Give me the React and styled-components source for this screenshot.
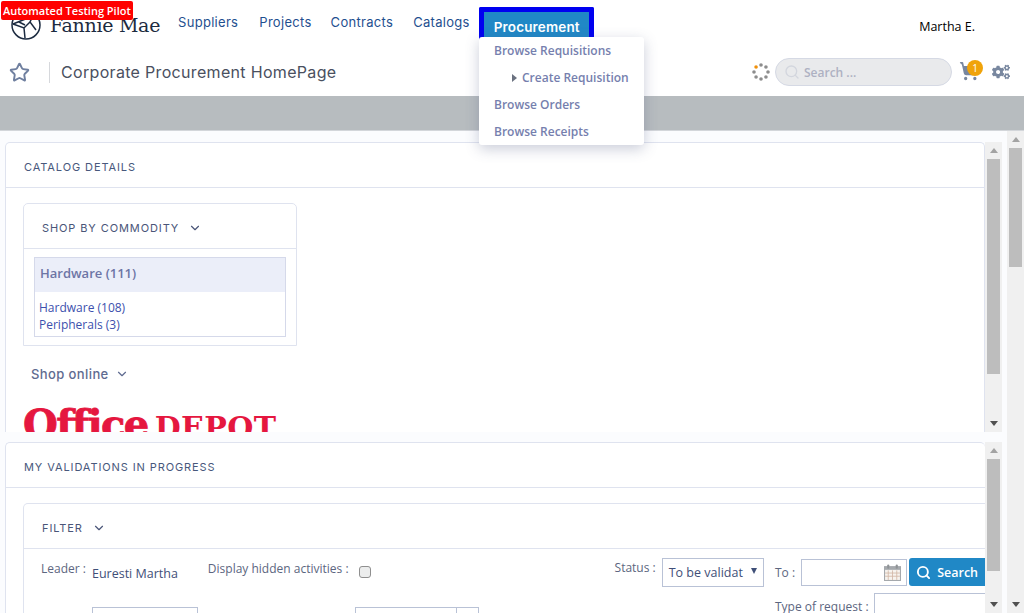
import React from 'react';
import styled, { createGlobalStyle } from 'styled-components';
import { ChevronDown, Star, Search, ShoppingCart } from 'lucide-react';
import { FaCogs } from 'react-icons/fa';

const GlobalStyle = createGlobalStyle`
  html, body { margin: 0; padding: 0; overflow: hidden; }
  body { font-family: "Open Sans", "Liberation Sans", sans-serif; background: #fbfcfe; }
  * { box-sizing: border-box; }
`;

const heading = `"Inter", "Open Sans", sans-serif`;

const Page = styled.div`
  position: relative;
  width: 1024px;
  height: 613px;
  overflow: hidden;
  display: flex;
  flex-direction: column;
`;

const Badge = styled.div`
  position: absolute;
  top: 1px;
  left: 1px;
  z-index: 5;
  background: #f00;
  color: #fff;
  font-size: 11px;
  font-weight: 600;
  line-height: 19px;
  height: 19px;
  padding: 0 2px;
  border-radius: 2px;
`;

const TopBar = styled.div`
  height: 48px;
  background: #fff;
  display: flex;
  padding-left: 11px;
`;

const Logo = styled.div`
  width: 167px;
  display: flex;
  align-items: flex-start;
  gap: 9px;
  padding-top: 10px;
`;

const LogoText = styled.div`
  font-family: "DejaVu Serif", serif;
  font-size: 19px;
  line-height: 30px;
  letter-spacing: -0.3px;
  color: #1c2b40;
  white-space: nowrap;
`;

const Nav = styled.nav`
  display: flex;
  align-items: flex-start;
`;

const NavLink = styled.a`
  font-family: ${heading};
  font-size: 13px;
  line-height: 16px;
  letter-spacing: 0.3px;
  color: #1f4f8f;
  margin-top: 14px;
  margin-right: ${(p) => p.$gap}px;
  white-space: nowrap;
`;

const ActiveNav = styled.a`
  margin-top: 7px;
  width: 115px;
  height: 41px;
  border: 5px solid #0000f0;
  border-bottom: 0;
  background: #2088c6;
  color: #fff;
  font-family: ${heading};
  font-size: 13.5px;
  font-weight: 600;
  line-height: 30px;
  letter-spacing: 0.15px;
  padding-left: 10px;
  border-radius: 2px 2px 0 0;
`;

const UserName = styled.div`
  margin-left: auto;
  margin-right: 49px;
  padding-top: 18px;
  font-size: 12.5px;
  line-height: 18px;
  color: #000;
`;

const Menu = styled.div`
  position: absolute;
  top: 37px;
  left: 479px;
  width: 165px;
  height: 108px;
  z-index: 4;
  background: #fff;
  border-radius: 3px;
  box-shadow: 0 4px 14px rgba(80, 90, 130, 0.3);
  display: flex;
  flex-direction: column;
`;

const MenuItem = styled.a`
  height: 27px;
  display: flex;
  align-items: center;
  gap: 5px;
  padding-left: ${(p) => (p.$sub ? 33 : 15)}px;
  font-size: 12px;
  font-weight: 600;
  color: #767fae;
  white-space: nowrap;
`;

const Caret = styled.span`
  width: 0;
  height: 0;
  border-left: 5px solid #6b7280;
  border-top: 4px solid transparent;
  border-bottom: 4px solid transparent;
`;

const TitleBar = styled.div`
  height: 48px;
  background: #fff;
  display: flex;
  align-items: center;
  padding-left: 9px;
`;

const Divider = styled.span`
  width: 1px;
  height: 21px;
  background: #d6d8dc;
  margin: 0 11px 0 19px;
`;

const PageTitle = styled.h1`
  margin: 0;
  font-family: ${heading};
  font-size: 16px;
  font-weight: 400;
  letter-spacing: 0.32px;
  color: #4a5060;
`;

const Tools = styled.div`
  margin-left: auto;
  display: flex;
  align-items: center;
  padding-right: 14px;
`;

const SearchBox = styled.div`
  width: 177px;
  height: 28px;
  margin: 0 7px 0 5px;
  border: 1px solid #d5d9e4;
  border-radius: 14px;
  background: #e9eaec;
  display: flex;
  align-items: center;
  padding-left: 8px;
  gap: 4px;
  font-size: 12px;
  font-weight: 600;
  color: #aeb1c2;
`;

const Cart = styled.div`
  position: relative;
  width: 33px;
  height: 22px;
  color: #78879f;
`;

const CartCount = styled.span`
  position: absolute;
  top: -1px;
  left: 8px;
  width: 16px;
  height: 16px;
  border-radius: 50%;
  background: #f0a30a;
  color: #fff;
  font-size: 10px;
  line-height: 16px;
  text-align: center;
`;

const Banner = styled.div`
  height: 35px;
  flex: none;
  background: #b7bcbf;
  border-bottom: 1px solid #d3d6da;
`;

const Body = styled.div`
  flex: 1;
  min-height: 0;
  display: flex;
`;

const Main = styled.div`
  width: 1002px;
  padding: 11px 0 0 5px;
  display: flex;
  flex-direction: column;
  gap: 10px;
`;

const Panel = styled.section`
  flex: none;
  height: ${(p) => p.$height}px;
  display: flex;
`;

const PanelInner = styled.div`
  width: 980px;
  overflow: hidden;
  background: #fff;
  border: 1px solid #dfe3ef;
  border-right: ${(p) => (p.$open ? 0 : '1px solid #dfe3ef')};
  border-bottom: 0;
  border-radius: 5px 5px 0 0;
`;

const PanelHead = styled.div`
  height: 45px;
  border-bottom: 1px solid #dfe3ef;
  padding: 3px 0 0 18px;
  display: flex;
  align-items: center;
  font-family: ${heading};
  font-size: 11px;
  font-weight: 400;
  letter-spacing: 0.9px;
  color: #48587c;
  white-space: nowrap;
`;

const PanelBody = styled.div`
  padding: 15px 0 0 17px;
`;

const Card = styled.div`
  width: ${(p) => p.$width};
  border: 1px solid #dfe3ef;
  border-bottom-width: ${(p) => (p.$noBottom ? 0 : '1px')};
  border-radius: 5px 5px 0 0;
`;

const CardHead = styled.div`
  height: 45px;
  border-bottom: 1px solid #dfe3ef;
  padding: 3px 0 0 18px;
  display: flex;
  align-items: center;
  gap: 9px;
  font-family: ${heading};
  font-size: 11px;
  font-weight: 400;
  letter-spacing: 0.9px;
  color: #4a5578;
  white-space: nowrap;
`;

const CommodityBox = styled.div`
  margin: 8px 10px;
  width: 252px;
  height: 80px;
  border: 1px solid #d5d9ea;
`;

const CommodityTitle = styled.div`
  height: 34px;
  background: #ebeef9;
  padding-left: 5px;
  font-size: 13px;
  font-weight: 600;
  line-height: 30px;
  color: #6d75a5;
`;

const CommodityLinks = styled.div`
  padding: 7px 0 0 4px;
  display: flex;
  flex-direction: column;
`;

const CommodityLink = styled.a`
  font-size: 12px;
  line-height: 17px;
  color: #3c50ad;
`;

const ShopOnline = styled.div`
  margin: 19px 0 0 8px;
  height: 18px;
  display: flex;
  align-items: center;
  gap: 6px;
  font-family: ${heading};
  font-size: 13px;
  font-weight: 500;
  letter-spacing: 0.4px;
  color: #5f6b90;
`;

const OfficeDepot = styled.div`
  margin: 18px 0 0 0;
  display: flex;
  align-items: baseline;
  gap: 7px;
  color: #e5173f;
  white-space: nowrap;
  line-height: 46px;
`;

const Office = styled.span`
  font-family: "DejaVu Serif", serif;
  font-size: 40px;
  font-weight: 700;
  letter-spacing: -1.6px;
  -webkit-text-stroke: 0.8px #e5173f;
`;

const Depot = styled.span`
  font-family: "DejaVu Serif", serif;
  font-size: 30px;
  font-weight: 700;
  letter-spacing: 0.4px;
`;

const FilterBody = styled.div`
  display: flex;
  padding-top: 9px;
`;

const FilterLeft = styled.div`
  width: 751px;
  flex: none;
  padding-left: 17px;
`;

const FilterRow = styled.div`
  display: flex;
  align-items: flex-start;
  height: ${(p) => p.$height}px;
`;

const Label = styled.span`
  font-size: 12px;
  line-height: 18px;
  color: #5c6680;
  white-space: nowrap;
  margin-left: ${(p) => p.$left || 0}px;
  padding-top: ${(p) => p.$top || 0}px;
`;

const Value = styled.span`
  font-size: 12.5px;
  line-height: 18px;
  color: #3f4f78;
  white-space: nowrap;
  margin-left: 6px;
  padding-top: 7px;
`;

const Check = styled.input`
  appearance: none;
  width: 12px;
  height: 12px;
  margin: 8px 0 0 10px;
  background: #eceded;
  border: 1px solid #8f8f8f;
  border-radius: 3px;
`;

const FakeSelect = styled.div`
  width: 102px;
  height: 29px;
  margin-left: 6px;
  border: 1px solid #b9c2d6;
  background: #fff;
  display: flex;
  align-items: center;
  justify-content: space-between;
  padding: 0 6px;
  font-size: 12.5px;
  color: #3f4f78;
  white-space: nowrap;
`;

const SelectArrow = styled.span`
  width: 0;
  height: 0;
  border-top: 6px solid #3f4f78;
  border-left: 3px solid transparent;
  border-right: 3px solid transparent;
  margin-bottom: 3px;
`;

const Input = styled.div`
  flex: none;
  width: ${(p) => p.$width}px;
  height: ${(p) => p.$height || 27}px;
  margin-left: ${(p) => p.$left || 0}px;
  margin-top: ${(p) => p.$top || 0}px;
  border: 1px solid #b9c2d6;
  background: #fff;
  display: flex;
  align-items: center;
  justify-content: flex-end;
  padding-right: 5px;
`;

const InputSplit = styled.span`
  width: 1px;
  height: 100%;
  background: #b9c2d6;
  margin-right: 16px;
`;

const FilterRight = styled.div`
  flex: none;
  width: 300px;
`;

const SearchButton = styled.button`
  width: 76px;
  height: 28px;
  margin-left: 2px;
  border: 0;
  border-radius: 3px 0 0 3px;
  background: #2088c6;
  color: #fff;
  display: flex;
  align-items: center;
  justify-content: center;
  gap: 6px;
  font-family: inherit;
  font-size: 12.5px;
  font-weight: 600;
`;

const Track = styled.div`
  flex: none;
  width: 17px;
  background: #f0f0f0;
  display: flex;
  flex-direction: column;
  align-items: center;
`;

const Arrow = styled.span`
  flex: none;
  margin: 6px 0;
  width: 0;
  height: 0;
  border-left: 4px solid transparent;
  border-right: 4px solid transparent;
  border-bottom: ${(p) => (p.$down ? 0 : '5px solid #a3a3a3')};
  border-top: ${(p) => (p.$down ? '5px solid #505050' : 0)};
`;

const Thumb = styled.div`
  flex: none;
  width: 13px;
  height: ${(p) => p.$height}px;
  background: #bdbdbd;
`;

const Spacer = styled.div`
  flex: 1;
`;

const Scrollbar = ({ thumb }) => (
  <Track>
    <Arrow />
    <Thumb $height={thumb} />
    <Spacer />
    <Arrow $down />
  </Track>
);

const FannieMark = () => (
  <svg width="30" height="30" viewBox="0 0 30 30" fill="none" stroke="#1c2b40" strokeWidth="1.5">
    <circle cx="15" cy="15" r="14" />
    <path d="M2 14 L22 6 L19 12 L25 20 M2 14 L13 18 L19 12 M8 12 L14 15 M13 18 L14 28" />
  </svg>
);

const Spinner = () => (
  <svg width="18" height="18" viewBox="0 0 18 18">
    {[0, 45, 90, 135, 180, 225, 270, 315].map((a, i) => (
      <circle
        key={a}
        cx={9 + 7 * Math.cos(((a - 135) * Math.PI) / 180)}
        cy={9 + 7 * Math.sin(((a - 135) * Math.PI) / 180)}
        r="1.8"
        fill={i === 0 ? '#f0900a' : '#8d8d8d'}
      />
    ))}
  </svg>
);

const CalendarIcon = ({ size }) => (
  <svg width={size} height={size} viewBox="0 0 16 16">
    <rect x="0.5" y="2.5" width="15" height="13" fill="#f7f3ee" stroke="#a5a9ad" />
    <rect x="0.5" y="2.5" width="15" height="3" fill="#a5a9ad" />
    <rect x="3" y="0.5" width="2" height="4" rx="1" fill="#8f9396" />
    <rect x="11" y="0.5" width="2" height="4" rx="1" fill="#8f9396" />
    <path d="M4 6 V15 M8 6 V15 M12 6 V15 M1 8.5 H15 M1 11.5 H15" stroke="#d3b8a8" strokeWidth="0.8" />
  </svg>
);

const App = () => {
  return (
    <Page>
      <GlobalStyle />
      <Badge>Automated Testing Pilot</Badge>
      <TopBar>
        <Logo>
          <FannieMark />
          <LogoText>Fannie Mae</LogoText>
        </Logo>
        <Nav>
          <NavLink $gap={21}>Suppliers</NavLink>
          <NavLink $gap={19}>Projects</NavLink>
          <NavLink $gap={20}>Contracts</NavLink>
          <NavLink $gap={9}>Catalogs</NavLink>
          <ActiveNav>Procurement</ActiveNav>
        </Nav>
        <UserName>Martha E.</UserName>
      </TopBar>
      <Menu>
        <MenuItem>Browse Requisitions</MenuItem>
        <MenuItem $sub><Caret />Create Requisition</MenuItem>
        <MenuItem>Browse Orders</MenuItem>
        <MenuItem>Browse Receipts</MenuItem>
      </Menu>
      <TitleBar>
        <Star size={21} color="#6f7f9f" strokeWidth={2.2} />
        <Divider />
        <PageTitle>Corporate Procurement HomePage</PageTitle>
        <Tools>
          <Spinner />
          <SearchBox>
            <Search size={16} color="#d3d6de" />
            <span>Search ...</span>
          </SearchBox>
          <Cart>
            <ShoppingCart size={20} fill="#78879f" />
            <CartCount>1</CartCount>
          </Cart>
          <FaCogs size={18} color="#78879f" />
        </Tools>
      </TitleBar>
      <Banner />
      <Body>
        <Main>
          <Panel $height={290}>
            <PanelInner>
              <PanelHead>CATALOG DETAILS</PanelHead>
              <PanelBody>
                <Card $width="274px">
                  <CardHead>
                    SHOP BY COMMODITY
                    <ChevronDown size={14} />
                  </CardHead>
                  <CommodityBox>
                    <CommodityTitle>Hardware (111)</CommodityTitle>
                    <CommodityLinks>
                      <CommodityLink>Hardware (108)</CommodityLink>
                      <CommodityLink>Peripherals (3)</CommodityLink>
                    </CommodityLinks>
                  </CommodityBox>
                </Card>
                <ShopOnline>
                  Shop online
                  <ChevronDown size={14} />
                </ShopOnline>
                <OfficeDepot>
                  <Office>Office</Office>
                  <Depot>DEPOT</Depot>
                </OfficeDepot>
              </PanelBody>
            </PanelInner>
            <Scrollbar thumb={215} />
          </Panel>
          <Panel $height={171}>
            <PanelInner $open>
              <PanelHead>MY VALIDATIONS IN PROGRESS</PanelHead>
              <PanelBody>
                <Card $width="1100px" $noBottom>
                  <CardHead>
                    FILTER
                    <ChevronDown size={14} />
                  </CardHead>
                  <FilterBody>
                    <FilterLeft>
                      <FilterRow $height={49}>
                        <Label $top={2}>Leader :</Label>
                        <Value>Euresti Martha</Value>
                        <Label $left={30} $top={2}>Display hidden activities :</Label>
                        <Check type="checkbox" />
                        <Label $left={244} $top={1}>Status :</Label>
                        <FakeSelect>
                          To be validat
                          <SelectArrow />
                        </FakeSelect>
                      </FilterRow>
                      <FilterRow $height={20}>
                        <Input $width={106} $left={51}>
                          <CalendarIcon size={16} />
                        </Input>
                        <Input $width={124} $left={157}>
                          <InputSplit />
                        </Input>
                      </FilterRow>
                    </FilterLeft>
                    <FilterRight>
                      <FilterRow $height={35}>
                        <Label $top={6}>To :</Label>
                        <Input $width={106} $left={6} $top={1}>
                          <CalendarIcon size={17} />
                        </Input>
                        <SearchButton>
                          <Search size={15} strokeWidth={3} />
                          Search
                        </SearchButton>
                      </FilterRow>
                      <FilterRow $height={30}>
                        <Label $top={5}>Type of request :</Label>
                        <Input $width={120} $left={5} $height={30} />
                      </FilterRow>
                    </FilterRight>
                  </FilterBody>
                </Card>
              </PanelBody>
            </PanelInner>
            <Scrollbar thumb={112} />
          </Panel>
        </Main>
        <Spacer />
        <Scrollbar thumb={119} />
      </Body>
    </Page>
  );
};

export default App;
